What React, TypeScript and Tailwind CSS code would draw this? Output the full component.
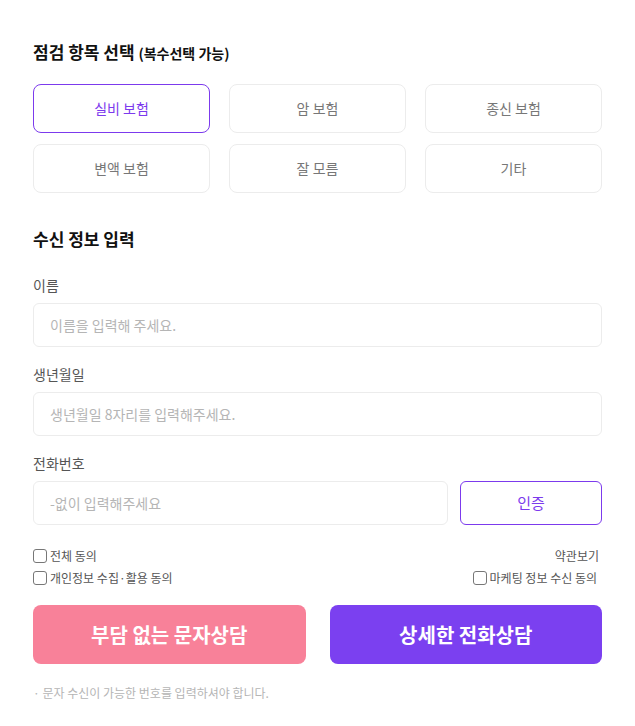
import React, { useState } from "react";

const items = ["실비 보험", "암 보험", "종신 보험", "변액 보험", "잘 모름", "기타"];

const Field = ({ label, placeholder }: { label: string; placeholder: string }) => (
  <div className="mt-[17px] first:mt-0">
    <label className="block text-[14px] leading-[20px] text-[#555]">{label}</label>
    <input
      placeholder={placeholder}
      className="mt-2 block h-[44px] w-full rounded-md border border-[#ececec] px-4 text-[14px] text-[#333] outline-none placeholder:text-[#b5b5b5]"
    />
  </div>
);

const Check = ({ label }: { label: string }) => (
  <label className="flex items-center gap-[3px] text-[12px] leading-[18px] text-[#555]">
    <span className="inline-block h-[14px] w-[14px] rounded-[3px] border border-[#777] bg-white" />
    {label}
  </label>
);

const App = () => {
  const [selected, setSelected] = useState<string[]>(["실비 보험"]);

  const toggle = (item: string) => {
    setSelected((prev) =>
      prev.includes(item) ? prev.filter((i) => i !== item) : [...prev, item]
    );
  };

  return (
    <div
      className="min-h-[726px] bg-white px-[33px] pt-[40px] pb-6"
      style={{ fontFamily: '"Noto Sans CJK KR", "Noto Sans", sans-serif' }}
    >
      <h2 className="text-[17px] leading-[24px] font-bold text-[#111]">
        점검 항목 선택 <span className="text-[14px] font-semibold">(복수선택 가능)</span>
      </h2>

      <div className="mt-[19px] grid grid-cols-3 gap-x-[19px] gap-y-[11px]">
        {items.map((item) => {
          const on = selected.includes(item);
          return (
            <button
              key={item}
              onClick={() => toggle(item)}
              className={`h-[49px] rounded-lg border text-[14px] ${
                on
                  ? "border-[#7c3aed] text-[#7c3aed]"
                  : "border-[#ececec] text-[#777]"
              }`}
            >
              {item}
            </button>
          );
        })}
      </div>

      <h2 className="mt-[34px] text-[17px] leading-[24px] font-bold text-[#111]">
        수신 정보 입력
      </h2>

      <div className="mt-[24px]">
        <Field label="이름" placeholder="이름을 입력해 주세요." />
        <Field label="생년월일" placeholder="생년월일 8자리를 입력해주세요." />
        <div className="mt-[17px]">
          <label className="block text-[14px] leading-[20px] text-[#555]">전화번호</label>
          <div className="mt-2 flex gap-[12px]">
            <input
              placeholder="-없이 입력해주세요"
              className="block h-[44px] flex-1 rounded-md border border-[#ececec] px-4 text-[14px] outline-none placeholder:text-[#b5b5b5]"
            />
            <button className="h-[44px] w-[142px] rounded-md border border-[#7c3aed] text-[15px] text-[#7c3aed]">
              인증
            </button>
          </div>
        </div>
      </div>

      <div className="mt-[22px] flex flex-col gap-[4px]">
        <div className="flex items-center justify-between">
          <Check label="전체 동의" />
          <span className="pr-[3px] text-[12px] leading-[18px] text-[#555]">약관보기</span>
        </div>
        <div className="flex items-center justify-between">
          <Check label="개인정보 수집·활용 동의" />
          <div className="pr-[5px]">
            <Check label="마케팅 정보 수신 동의" />
          </div>
        </div>
      </div>

      <div className="mt-[18px] flex gap-[24px]">
        <button className="h-[59px] flex-1 rounded-lg bg-[#f88199] text-[20px] font-bold text-white">
          부담 없는 문자상담
        </button>
        <button className="h-[59px] flex-1 rounded-lg bg-[#7b40f0] text-[20px] font-bold text-white">
          상세한 전화상담
        </button>
      </div>

      <p className="mt-[20px] text-[12px] leading-[18px] text-[#b5b5b5]">
        · 문자 수신이 가능한 번호를 입력하셔야 합니다.
      </p>
    </div>
  );
};

export default App;
